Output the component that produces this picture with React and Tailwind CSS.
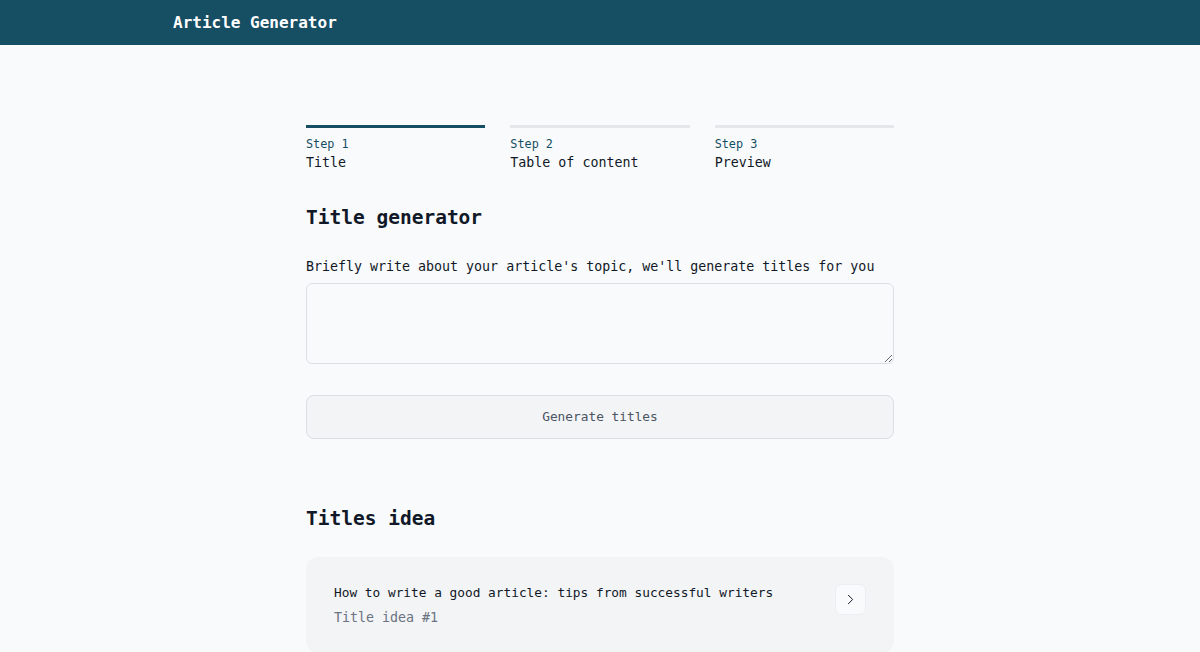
import React from "react";
import { ChevronRight } from "lucide-react";

const mono = { fontFamily: '"DejaVu Sans Mono", "Liberation Mono", monospace' };

function Step({ n, label, active }) {
  return (
    <div className="flex flex-col">
      <div className={`h-[3px] ${active ? "bg-[#164e63]" : "bg-[#e5e7eb]"}`} />
      <div className="mt-[8px] text-[11.8px] leading-4 text-[#164e63]">Step {n}</div>
      <div className="mt-[1px] text-[13.3px] leading-5 text-[#111827]">{label}</div>
    </div>
  );
}

export default function App() {
  return (
    <div className="min-h-[652px] bg-[#f8fafc]" style={mono}>
      <header className="h-[45px] bg-[#164e63] flex items-center">
        <div className="w-[854px] mx-auto text-[16px] font-bold text-white">Article Generator</div>
      </header>
      <main className="w-[588px] mx-auto pt-20 pb-10">
        <div className="grid grid-cols-3 gap-[25px]">
          <Step n={1} label="Title" active />
          <Step n={2} label="Table of content" />
          <Step n={3} label="Preview" />
        </div>
        <h2 className="mt-[31px] text-[19.5px] leading-7 font-bold text-[#111827]">Title generator</h2>
        <p className="mt-[25px] text-[13.3px] leading-5 text-[#111827]">
          Briefly write about your article's topic, we'll generate titles for you
        </p>
        <textarea
          className="mt-[6px] block w-full h-[81px] rounded-md border border-[#dcdee3] bg-[#f8fafc] outline-none"
        />
        <button className="mt-[31px] w-full h-[44px] rounded-lg border border-[#dcdee3] bg-[#f3f4f6] text-[12.8px] text-[#4b5563]">
          Generate titles
        </button>
        <h2 className="mt-[66px] text-[19.5px] leading-7 font-bold text-[#111827]">Titles idea</h2>
        <div className="mt-[24px] rounded-xl bg-[#f3f4f6] px-7 pt-[26px] pb-[25px] flex justify-between">
          <div className="flex flex-col">
            <div className="text-[12.8px] leading-5 text-[#111827]">
              How to write a good article: tips from successful writers
            </div>
            <div className="mt-[5px] text-[13.3px] leading-5 text-[#6b7280]">Title idea #1</div>
          </div>
          <button className="self-start mt-[1px] w-[31px] h-[31px] rounded-md bg-[#f8fafc] border border-[#eceef1] flex items-center justify-center text-[#111827]">
            <ChevronRight size={17} strokeWidth={1.4} />
          </button>
        </div>
      </main>
    </div>
  );
}
